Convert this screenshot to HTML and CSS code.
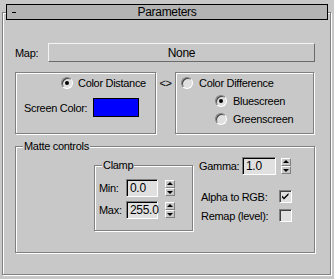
FILE: index.html
```html
<html lang="en">
<head>
    <meta charset="UTF-8">
    <title>Parameters</title>
    <link rel="stylesheet" href="styles.css">
</head>
<body>
    <div class="rollout-title">
        <span class="collapse"></span>
        <span class="title-text">Parameters</span>
    </div>
    <div class="rollout">
        <div class="map-row">
            <span class="map-label">Map:</span>
            <button class="map-btn">None</button>
        </div>

        <div class="mode-row">
            <div class="group distance">
                <div class="radio-row">
                    <span class="radio on"></span>
                    <span>Color Distance</span>
                </div>
                <div class="color-row">
                    <span class="color-label">Screen Color:</span>
                    <span class="swatch"></span>
                </div>
            </div>
            <div class="swap">&lt;&gt;</div>
            <div class="group difference">
                <div class="radio-row">
                    <span class="radio"></span>
                    <span>Color Difference</span>
                </div>
                <div class="radio-row sub">
                    <span class="radio on"></span>
                    <span>Bluescreen</span>
                </div>
                <div class="radio-row sub">
                    <span class="radio"></span>
                    <span>Greenscreen</span>
                </div>
            </div>
        </div>

        <div class="group matte">
            <span class="legend">Matte controls</span>
            <div class="group clamp">
                <span class="legend">Clamp</span>
                <div class="field-row">
                    <span class="clamp-label">Min:</span>
                    <span class="input clamp-input">0.0</span>
                    <span class="spinner"><span class="spin up"></span><span class="spin down"></span></span>
                </div>
                <div class="field-row max">
                    <span class="clamp-label">Max:</span>
                    <span class="input clamp-input">255.0</span>
                    <span class="spinner"><span class="spin up"></span><span class="spin down"></span></span>
                </div>
            </div>
            <div class="matte-right">
                <div class="field-row">
                    <span class="gamma-label">Gamma:</span>
                    <span class="input gamma-input">1.0</span>
                    <span class="spinner gamma-spin"><span class="spin up"></span><span class="spin down"></span></span>
                </div>
                <div class="check-row first">
                    <span class="check-label">Alpha to RGB:</span>
                    <span class="check">
                        <svg width="11" height="11" viewBox="0 0 11 11"><path d="M2 4.5 L4 6.5 L8.5 2 L8.5 4 L4 8.5 L2 6.5 Z" fill="#000"/></svg>
                    </span>
                </div>
                <div class="check-row">
                    <span class="check-label">Remap (level):</span>
                    <span class="check"></span>
                </div>
            </div>
        </div>
    </div>
</body>
</html>
```

FILE: styles.css
```css
body {
    margin: 0;
    padding-top: 4px;
    box-sizing: border-box;
    width: 334px;
    height: 279px;
    overflow: hidden;
    background: #c8c8c8;
    color: #000;
    font-family: "Liberation Sans", Arial, sans-serif;
    font-size: 11px;
    letter-spacing: -0.3px;
}
.rollout-title {
    position: relative;
    z-index: 1;
    margin: 0 6px;
    height: 16px;
    box-sizing: border-box;
    border: 1px solid #000;
    background: #b4b4b4;
    display: flex;
    align-items: center;
}
.collapse {
    width: 4px;
    height: 1px;
    margin-left: 5px;
    background: #000;
}
.title-text {
    flex: 1;
    text-align: center;
    margin-right: 9px;
    font-size: 12px;
}
.rollout {
    margin: -8px 3px 0 2px;
    height: 263px;
    box-sizing: border-box;
    border: 1px solid #808080;
    box-shadow: inset 1px 1px #fff, 1px 1px #fff;
    padding: 30px 14px 0 12px;
}
.map-row {
    display: flex;
    align-items: center;
    height: 19px;
}
.map-label {
    width: 33px;
}
.map-btn {
    width: 267px;
    height: 19px;
    padding: 0;
    font: inherit;
    font-size: 12px;
    letter-spacing: inherit;
    color: #000;
    background: #c8c8c8;
    border: 1px solid;
    border-color: #f4f4f4 #6a6a6a #6a6a6a #f4f4f4;
}
.mode-row {
    display: flex;
    align-items: flex-start;
    margin-top: 10px;
}
.group {
    position: relative;
    box-sizing: border-box;
    border: 1px solid #808080;
    box-shadow: inset 1px 1px #fff, 1px 1px #fff;
}
.legend {
    position: absolute;
    top: -7px;
    left: 7px;
    padding: 0 1px;
    line-height: 13px;
    background: #c8c8c8;
}
.distance {
    width: 141px;
    height: 62px;
    padding-top: 4px;
}
.radio-row {
    display: flex;
    align-items: center;
    gap: 5px;
    height: 12px;
}
.distance .radio-row {
    margin-left: 45px;
}
.color-row {
    display: flex;
    align-items: center;
    height: 19px;
    margin: 9px 0 0 8px;
}
.color-label {
    width: 69px;
}
.swatch {
    width: 46px;
    height: 19px;
    box-sizing: border-box;
    border: 1px solid #000;
    background: #0000ff;
}
.swap {
    width: 19px;
    margin-top: 5px;
    line-height: 12px;
    text-align: center;
}
.difference {
    width: 139px;
    height: 62px;
    padding-top: 4px;
}
.difference .radio-row {
    margin-left: 5px;
    gap: 6px;
}
.difference .radio-row.sub {
    margin: 6px 0 0 39px;
}
.radio {
    position: relative;
    flex: none;
    width: 12px;
    height: 12px;
    box-sizing: border-box;
    border-radius: 50%;
    border: 1px solid;
    border-color: #808080 #fff #fff #808080;
    box-shadow: inset 1px 1px #404040;
    background: #e0e0e0;
}
.radio.on::after {
    content: "";
    position: absolute;
    left: 3px;
    top: 3px;
    width: 4px;
    height: 4px;
    border-radius: 50%;
    background: #000;
}
.matte {
    width: 300px;
    height: 107px;
    margin-top: 12px;
    display: flex;
    align-items: flex-start;
}
.clamp {
    width: 99px;
    height: 66px;
    margin: 18px 0 0 78px;
    padding: 13px 0 0 4px;
}
.field-row {
    display: flex;
    align-items: center;
    height: 18px;
}
.field-row.max {
    margin-top: 4px;
}
.clamp-label {
    width: 27px;
}
.input {
    height: 18px;
    box-sizing: border-box;
    padding: 1px 0 0 3px;
    line-height: 14px;
    font-size: 12px;
    border: 1px solid;
    border-color: #808080 #fff #fff #808080;
    box-shadow: inset 1px 1px #000;
    background: #e0e0e0;
}
.clamp-input {
    width: 32px;
}
.spinner {
    display: flex;
    flex-direction: column;
    margin-left: 7px;
}
.spin {
    position: relative;
    width: 10px;
    height: 8px;
    box-sizing: border-box;
    border: 1px solid;
    border-color: #fff #808080 #808080 #fff;
}
.spin::after {
    content: "";
    position: absolute;
    left: 1px;
    border-left: 3px solid transparent;
    border-right: 3px solid transparent;
}
.spin.up::after {
    top: 1px;
    border-bottom: 3px solid #000;
}
.spin.down::after {
    top: 2px;
    border-top: 3px solid #000;
}
.matte-right {
    margin: 10px 0 0 6px;
}
.gamma-label {
    width: 43px;
}
.gamma-input {
    width: 34px;
}
.gamma-spin {
    margin-left: 5px;
}
.check-row {
    display: flex;
    align-items: center;
    height: 13px;
    margin-top: 6px;
    padding-left: 2px;
}
.check-row.first {
    margin-top: 15px;
}
.check-label {
    width: 78px;
}
.check {
    width: 13px;
    height: 13px;
    box-sizing: border-box;
    border: 1px solid;
    border-color: #808080 #fff #fff #808080;
    box-shadow: inset 1px 1px #404040;
    background: #e0e0e0;
}
.check svg {
    display: block;
}
```
